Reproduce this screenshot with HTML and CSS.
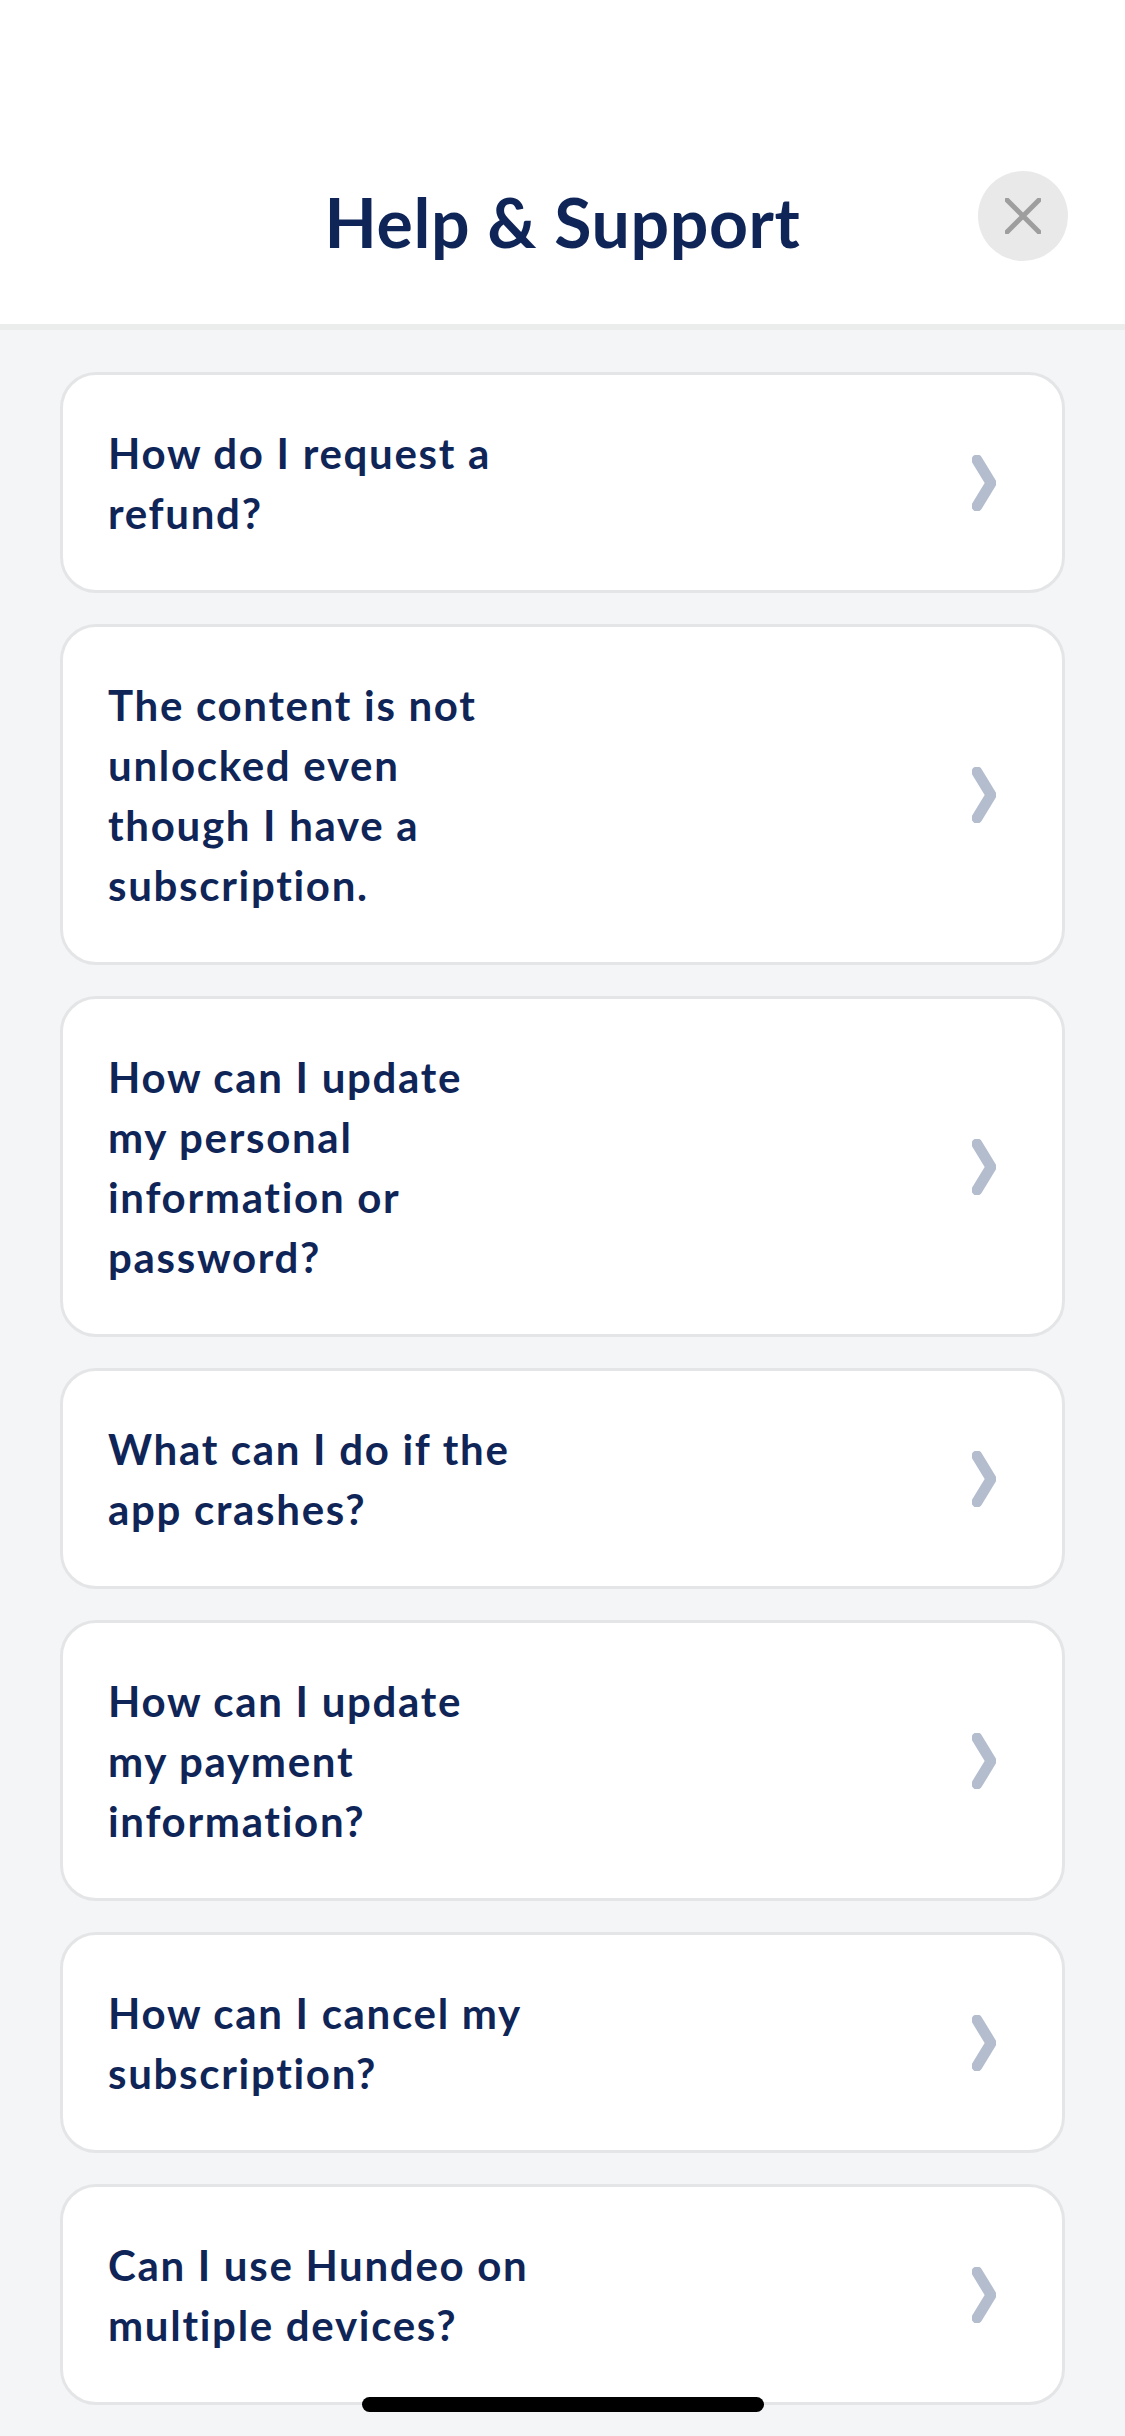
FILE: index.html
```html
<!DOCTYPE html>
<html lang="en">
<head>
  <meta charset="UTF-8" />
  <meta name="viewport" content="width=device-width, initial-scale=1.0"/>
  <title>Help &amp; Support</title>
  <link rel="stylesheet" href="styles.css">
</head>
<body>

  <header>
    <h1 class="title">Help &amp; Support</h1>
    <button class="close-btn" aria-label="Close">
      <svg width="36" height="36" viewBox="0 0 36 36"><path d="M2 2 L34 34 M34 2 L2 34"/></svg>
    </button>
  </header>

  <!-- Questions -->
  <div class="faq-list">
    <a class="faq-item">
      <span class="question">How do I request a<br>refund?</span>
      <svg class="chevron" width="24" height="56" viewBox="0 0 24 56"><path d="M5 5 L19 28 L5 51"/></svg>
    </a>
    <a class="faq-item">
      <span class="question">The content is not<br>unlocked even<br>though I have a<br>subscription.</span>
      <svg class="chevron" width="24" height="56" viewBox="0 0 24 56"><path d="M5 5 L19 28 L5 51"/></svg>
    </a>
    <a class="faq-item">
      <span class="question">How can I update<br>my personal<br>information or<br>password?</span>
      <svg class="chevron" width="24" height="56" viewBox="0 0 24 56"><path d="M5 5 L19 28 L5 51"/></svg>
    </a>
    <a class="faq-item">
      <span class="question">What can I do if the<br>app crashes?</span>
      <svg class="chevron" width="24" height="56" viewBox="0 0 24 56"><path d="M5 5 L19 28 L5 51"/></svg>
    </a>
    <a class="faq-item">
      <span class="question">How can I update<br>my payment<br>information?</span>
      <svg class="chevron" width="24" height="56" viewBox="0 0 24 56"><path d="M5 5 L19 28 L5 51"/></svg>
    </a>
    <a class="faq-item">
      <span class="question">How can I cancel my<br>subscription?</span>
      <svg class="chevron" width="24" height="56" viewBox="0 0 24 56"><path d="M5 5 L19 28 L5 51"/></svg>
    </a>
    <a class="faq-item">
      <span class="question">Can I use Hundeo on<br>multiple devices?</span>
      <svg class="chevron" width="24" height="56" viewBox="0 0 24 56"><path d="M5 5 L19 28 L5 51"/></svg>
    </a>
  </div>

  <div class="home-bar"></div>

</body>
</html>
```

FILE: styles.css
```css
:root {
  --navy: #0f2557;
  --page-bg: #f4f5f7;
  --line: #e4e5e7;
  --chevron: #b4bdce;
}

html, body {
  height: 2436px;
}

body {
  margin: 0;
  position: relative;
  overflow: hidden;
  font-family: "Lato", "Open Sans", sans-serif;
  background: var(--page-bg);
  color: var(--navy);
}

header {
  box-sizing: border-box;
  height: 330px;
  padding: 160px 57px 0 0;
  background: #fff;
  border-bottom: 6px solid #ebecec;
  display: flex;
  justify-content: flex-end;
  align-items: flex-start;
  position: relative;
}

.title {
  position: absolute;
  left: 0;
  right: 0;
  top: 180px;
  margin: 0;
  text-align: center;
  font-size: 68px;
  line-height: 84px;
  font-weight: 700;
  letter-spacing: 0.6px;
}

.close-btn {
  width: 90px;
  height: 90px;
  padding: 0;
  border: none;
  border-radius: 50%;
  background: #e9e9e9;
  display: flex;
  align-items: center;
  justify-content: center;
  margin-top: 11px;
}

.close-btn path {
  fill: none;
  stroke: #9e9e9e;
  stroke-width: 5;
  stroke-linecap: round;
}

.faq-list {
  padding: 42px 60px 0;
  display: flex;
  flex-direction: column;
  gap: 31px;
}

.faq-item {
  box-sizing: border-box;
  padding: 48px 64px 47px 45px;
  background: #fff;
  border: 3px solid var(--line);
  border-radius: 36px;
  display: flex;
  align-items: center;
  justify-content: space-between;
}

.question {
  font-size: 42px;
  line-height: 60px;
  font-weight: 700;
  letter-spacing: 1.7px;
}

.chevron {
  margin-right: 2px;
}

.chevron path {
  fill: none;
  stroke: var(--chevron);
  stroke-width: 11;
  stroke-linecap: round;
  stroke-linejoin: round;
}

.home-bar {
  position: absolute;
  left: 362px;
  bottom: 24px;
  width: 402px;
  height: 15px;
  border-radius: 8px;
  background: #000;
}
```
